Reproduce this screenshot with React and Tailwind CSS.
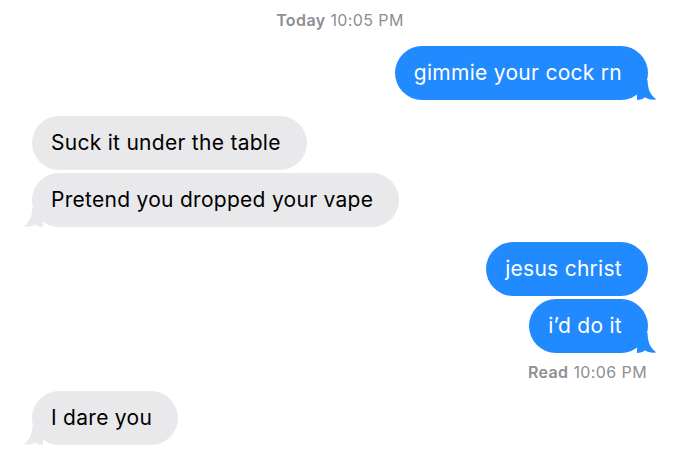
import React from "react";

const BLUE = "#218aff";

const Tail = ({ side, color }) => (
  <svg
    viewBox="0 0 20 20"
    className={
      side === "right"
        ? "absolute -right-[9px] bottom-0 w-[20px] h-[20px]"
        : "absolute -left-[9px] bottom-0 w-[20px] h-[20px] -scale-x-100"
    }>
    <path
      d="M0 0 L10.5 0 C11 8 12 14 19.5 19.6 C14 20.2 10.5 19 8 17.2 C6 19 3 20 0 20 Z"
      fill={color}
    />
  </svg>
);

const Bubble = ({ text, mine, tail }) => (
  <div
    className={`relative h-[54px] rounded-[27px] flex items-center pl-[19px] pr-[26px] text-[21px] tracking-[0.28px] ${
      mine ? "bg-[#218aff] text-white" : "bg-[#e9e9eb] text-black"
    }`}>
    <span className="relative z-10">{text}</span>
    {tail && (
      <Tail side={mine ? "right" : "left"} color={mine ? BLUE : "#e9e9eb"} />
    )}
  </div>
);

const Row = ({ mine, className = "", children }) => (
  <div
    className={`flex ${mine ? "justify-end pr-[32px]" : "justify-start pl-[32px]"} ${className}`}>
    {children}
  </div>
);

export default function App() {
  return (
    <div
      className="w-[680px] h-[464px] overflow-hidden bg-white flex flex-col"
      style={{ fontFamily: "Inter, 'Liberation Sans', sans-serif" }}>
      {/* Timestamp */}
      <div className="pt-[11px] h-[46px] text-center text-[16px] tracking-[0.4px] leading-[18px] text-[#8e8e93]">
        <span className="font-semibold">Today</span> 10:05 PM
      </div>

      <Row mine>
        <Bubble mine tail text="gimmie your cock rn" />
      </Row>

      <Row className="mt-[16px]">
        <Bubble text="Suck it under the table" />
      </Row>
      <Row className="mt-[3px]">
        <Bubble tail text="Pretend you dropped your vape" />
      </Row>

      <Row mine className="mt-[15px]">
        <Bubble mine text="jesus christ" />
      </Row>
      <Row mine className="mt-[3px]">
        <Bubble mine tail text="i’d do it" />
      </Row>

      <div className="mt-[10px] h-[18px] pr-[33px] text-right text-[16px] tracking-[0.4px] leading-[18px] text-[#8e8e93]">
        <span className="font-semibold">Read</span> 10:06 PM
      </div>

      <Row className="mt-[10px]">
        <Bubble tail text="I dare you" />
      </Row>
    </div>
  );
}
